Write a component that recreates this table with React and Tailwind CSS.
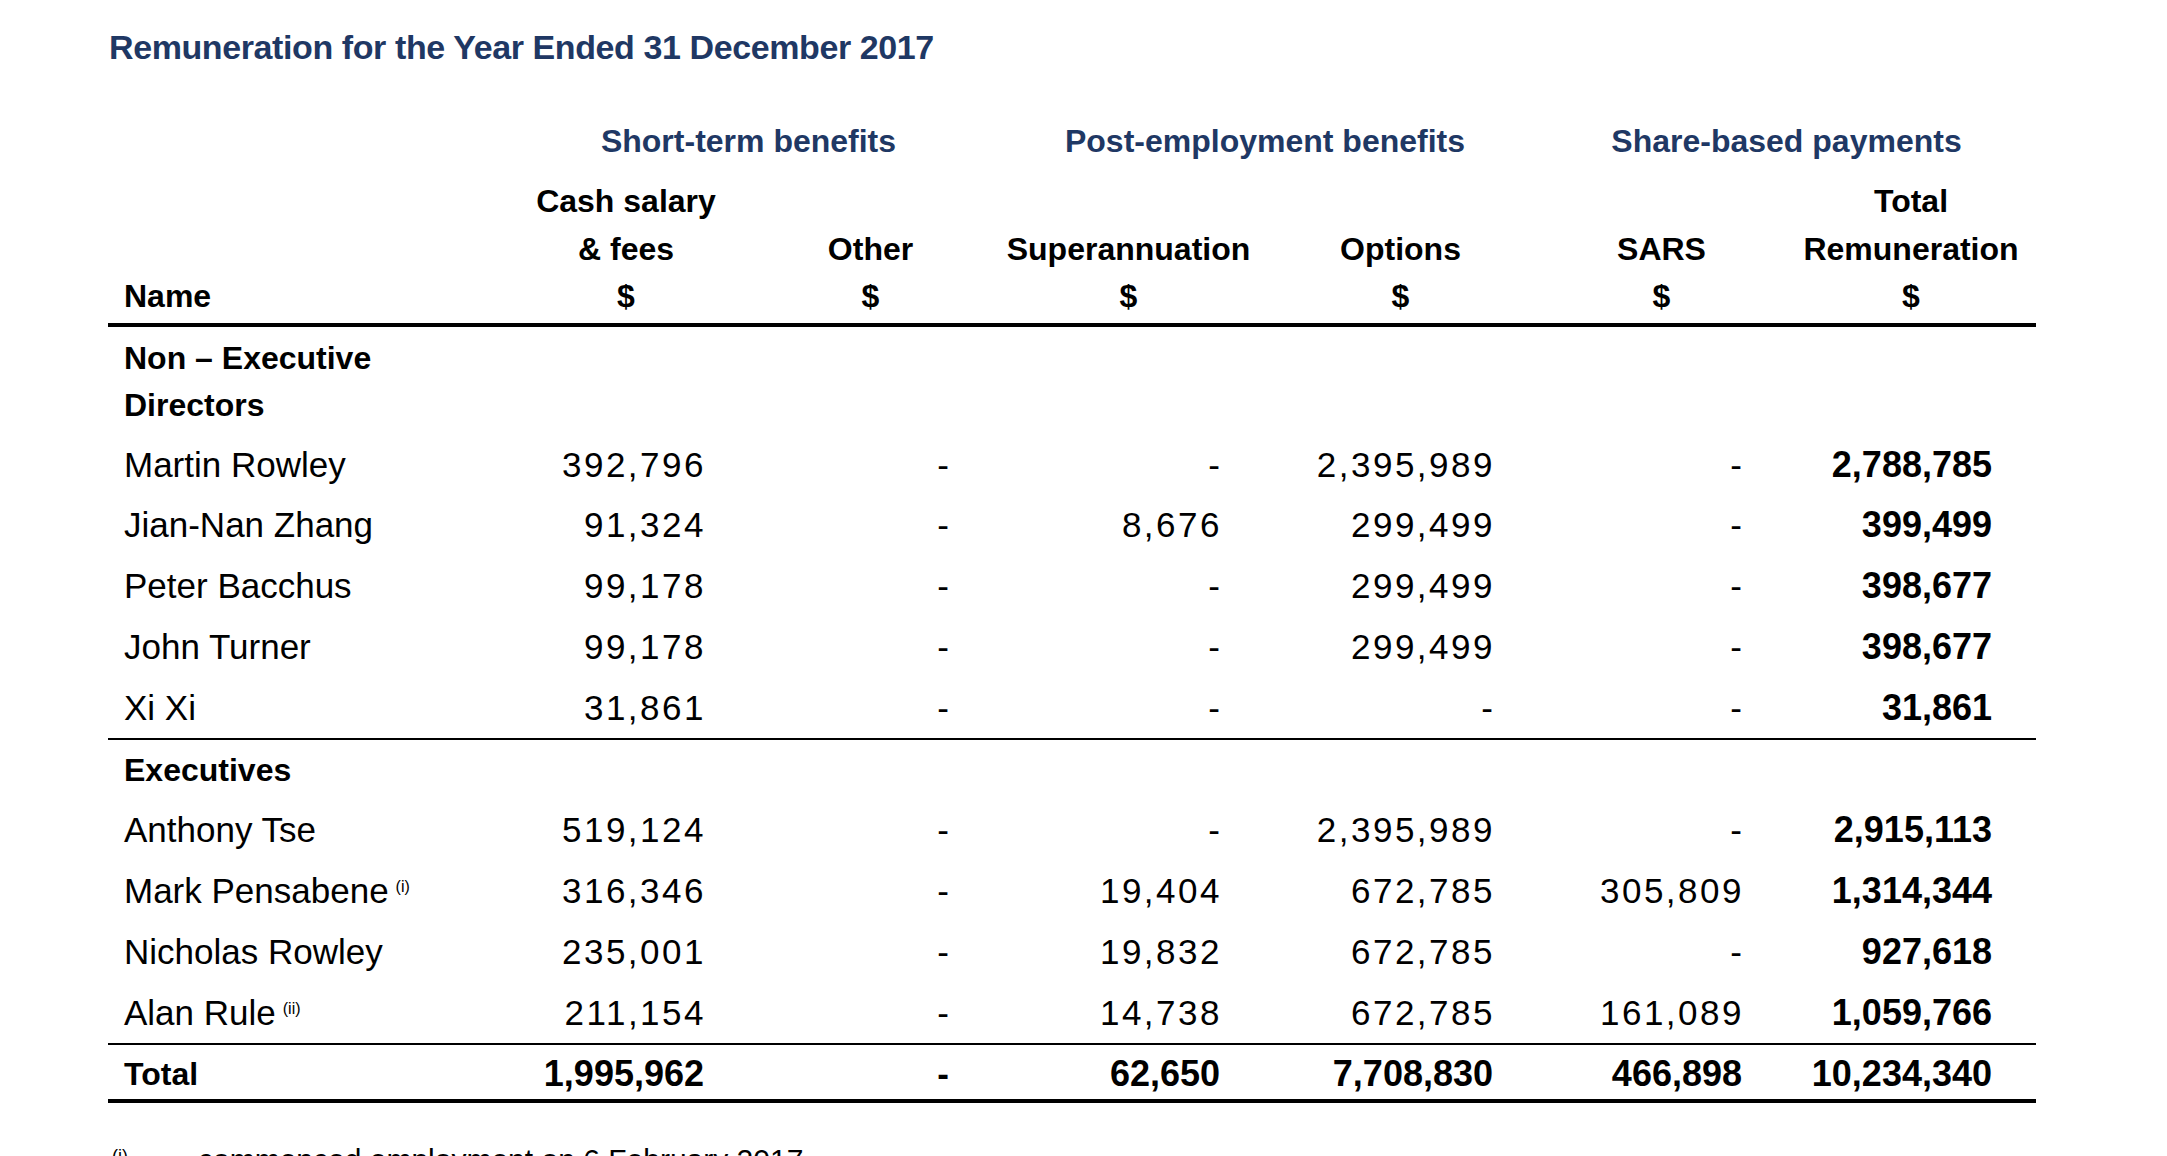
import React from 'react';

const COLS = 'grid grid-cols-[396px_244px_245px_271px_273px_249px_250px]';

const nonExecutive = [
  { name: 'Martin Rowley', values: ['392,796', '-', '-', '2,395,989', '-', '2,788,785'] },
  { name: 'Jian-Nan Zhang', values: ['91,324', '-', '8,676', '299,499', '-', '399,499'] },
  { name: 'Peter Bacchus', values: ['99,178', '-', '-', '299,499', '-', '398,677'] },
  { name: 'John Turner', values: ['99,178', '-', '-', '299,499', '-', '398,677'] },
  { name: 'Xi Xi', values: ['31,861', '-', '-', '-', '-', '31,861'] },
];

const executives = [
  { name: 'Anthony Tse', values: ['519,124', '-', '-', '2,395,989', '-', '2,915,113'] },
  { name: 'Mark Pensabene', note: '(i)', values: ['316,346', '-', '19,404', '672,785', '305,809', '1,314,344'] },
  { name: 'Nicholas Rowley', values: ['235,001', '-', '19,832', '672,785', '-', '927,618'] },
  { name: 'Alan Rule', note: '(ii)', values: ['211,154', '-', '14,738', '672,785', '161,089', '1,059,766'] },
];

const totals = ['1,995,962', '-', '62,650', '7,708,830', '466,898', '10,234,340'];

function Amount({ value, bold }) {
  if (value === '-') {
    return <div className={`text-right pr-[44px] ${bold ? 'font-bold' : ''}`}>-</div>;
  }
  if (bold) {
    return <div className="text-right pr-[44px] text-[36px] font-bold">{value}</div>;
  }
  return <div className="text-right pr-[42px] tracking-[2.5px]">{value}</div>;
}

function PersonRow({ person }) {
  return (
    <div className={`${COLS} h-[60.75px] leading-[60.75px] text-[35px] whitespace-nowrap`}>
      <div className="pl-4">
        {person.name}
        {person.note && (
          <span className="relative -top-[11px] ml-[7px] text-[16px] leading-none">{person.note}</span>
        )}
      </div>
      {person.values.map((v, i) => (
        <Amount key={i} value={v} bold={i === 5} />
      ))}
    </div>
  );
}

export default function App() {
  return (
    <div className="h-[1156px] w-full overflow-hidden bg-white text-black font-['Liberation_Sans',Arial,sans-serif]">
      <div className="ml-[108px] w-[1928px] pt-[27px]">
        <h1 className="text-[34px] leading-[40px] font-bold tracking-[-0.4px] text-[#1f3864] pl-px">
          Remuneration for the Year Ended 31 December 2017
        </h1>

        {/* group headings */}
        <div className={`${COLS} mt-[54px] text-[32px] leading-[40px] font-bold text-[#1f3864] whitespace-nowrap`}>
          <div />
          <div className="col-span-2 text-center">Short-term benefits</div>
          <div className="col-span-2 text-center">Post-employment benefits</div>
          <div className="col-span-2 text-center">Share-based payments</div>
        </div>

        {/* column headings */}
        <div className={`${COLS} mt-[17px] items-end pb-[2.5px] border-b-4 border-black text-[32px] leading-[47.5px] font-bold whitespace-nowrap`}>
          <div className="pl-4">Name</div>
          <div className="text-center">Cash salary<br />&amp; fees<br />$</div>
          <div className="text-center">Other<br />$</div>
          <div className="text-center">Superannuation<br />$</div>
          <div className="text-center">Options<br />$</div>
          <div className="text-center">SARS<br />$</div>
          <div className="text-center">Total<br />Remuneration<br />$</div>
        </div>

        <div className="border-b-2 border-black">
          <div className="pl-4 pt-[8px] pb-[5.5px] text-[32px] leading-[47px] font-bold">
            Non – Executive<br />Directors
          </div>
          {nonExecutive.map((p) => (
            <PersonRow key={p.name} person={p} />
          ))}
        </div>

        <div className="border-b-2 border-black">
          <div className="pl-4 pt-[7px] pb-[6px] text-[32px] leading-[47px] font-bold">Executives</div>
          {executives.map((p) => (
            <PersonRow key={p.name} person={p} />
          ))}
        </div>

        <div className={`${COLS} h-[58px] leading-[58px] text-[35px] border-b-4 border-black whitespace-nowrap`}>
          <div className="pl-4 text-[32px] font-bold">Total</div>
          {totals.map((v, i) => (
            <Amount key={i} value={v} bold />
          ))}
        </div>

        <div className="mt-[42px] text-[30px] leading-[30px] whitespace-nowrap">
          <span className="relative -top-[8px] ml-[4px] text-[18px] leading-none">(i)</span>
          <span className="ml-[70px]">commenced employment on 6 February 2017</span>
        </div>
      </div>
    </div>
  );
}
